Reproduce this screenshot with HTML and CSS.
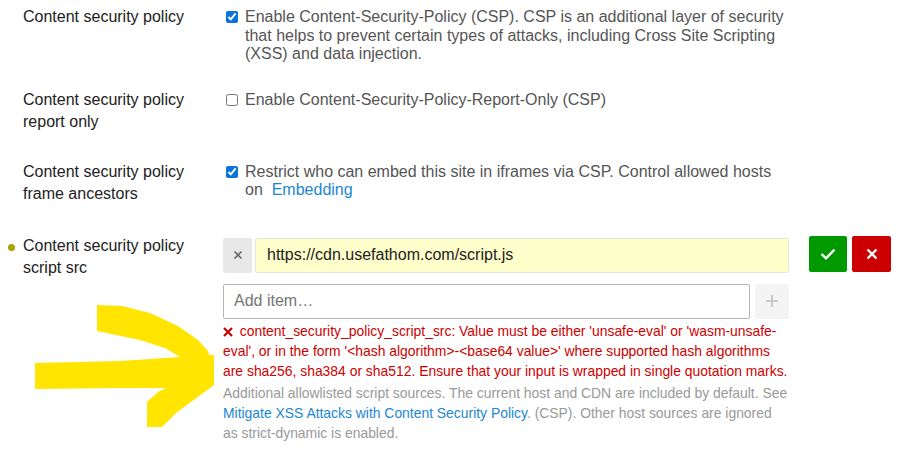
FILE: index.html
```html
<!DOCTYPE html>
<html lang="en">
<head>
<meta charset="utf-8">
<title>Content security policy settings</title>
<link rel="stylesheet" href="styles.css">
</head>
<body>
<div class="page">
  <div class="row row--g25">
    <div class="label">Content security policy</div>
    <div class="content">
      <label class="check"><input type="checkbox" checked><span>Enable Content-Security-Policy (CSP). CSP is an additional layer of security that helps to prevent certain types of attacks, including Cross Site Scripting (XSS) and data injection.</span></label>
    </div>
  </div>
  <div class="row row--g28">
    <div class="label">Content security policy report only</div>
    <div class="content">
      <label class="check"><input type="checkbox"><span>Enable Content-Security-Policy-Report-Only (CSP)</span></label>
    </div>
  </div>
  <div class="row row--g30">
    <div class="label">Content security policy frame ancestors</div>
    <div class="content">
      <label class="check"><input type="checkbox" checked><span>Restrict who can embed this site in iframes via CSP. Control allowed hosts on&nbsp; <a class="link" href="#">Embedding</a></span></label>
    </div>
  </div>
  <div class="row">
    <div class="label label--dirty"><span class="dot"></span><span>Content security policy script src</span></div>
    <div class="content content--list">
      <div class="item">
        <button class="remove" type="button" aria-label="Remove"><svg width="10" height="10" viewBox="0 0 10 10"><path d="M1.5 1.5L8.5 8.5M8.5 1.5L1.5 8.5" stroke="#666" stroke-width="1.6" fill="none"/></svg></button>
        <div class="value">https://cdn.usefathom.com/script.js</div>
      </div>
      <div class="item item--add">
        <input class="add-input" type="text" placeholder="Add item…">
        <button class="plus" type="button" aria-label="Add"><svg width="14" height="14" viewBox="0 0 14 14"><path d="M7 1V13M1 7H13" stroke="#bdbdbd" stroke-width="1.6" fill="none"/></svg></button>
      </div>
      <div class="error"><svg class="error-x" width="10" height="10" viewBox="0 0 10 10"><path d="M1 1L9 9M9 1L1 9" stroke="#cc0000" stroke-width="2.2" fill="none"/></svg> content_security_policy_script_src: Value must be either 'unsafe-eval' or 'wasm-unsafe-eval', or in the form '&lt;hash algorithm&gt;-&lt;base64 value&gt;' where supported hash algorithms are sha256, sha384 or sha512. Ensure that your input is wrapped in single quotation marks.</div>
      <div class="help">Additional allowlisted script sources. The current host and CDN are included by default. See <a class="link" href="#">Mitigate XSS Attacks with Content Security Policy</a>. (CSP). Other host sources are ignored as strict-dynamic is enabled.</div>
    </div>
    <div class="actions">
      <button class="btn btn--ok" type="button" aria-label="Save"><svg width="16" height="12" viewBox="0 0 16 12"><path d="M1.5 6L6 10.3L14.5 1.7" stroke="#fff" stroke-width="2.4" fill="none"/></svg></button>
      <button class="btn btn--cancel" type="button" aria-label="Cancel"><svg width="12" height="12" viewBox="0 0 12 12"><path d="M1.5 1.5L10.5 10.5M10.5 1.5L1.5 10.5" stroke="#fff" stroke-width="2.4" fill="none"/></svg></button>
    </div>
  </div>
  <svg class="arrow" width="917" height="461" viewBox="0 0 917 461" aria-hidden="true">
    <path fill="#ffe500" d="M35 389 L35 363 L120 361 L180 357 L165 348 L140 340 L97 331 L97 305 L122 306 L150 313 L178 326 L198 340 L208 351 L209 355 L214 355 L214 385 L195 399 L176 413 L162 427 L147 427 L147 402 L158 392 L166 388 L120 388 Z"/>
  </svg>
</div>
</body>
</html>
```

FILE: styles.css
```css
* {
  box-sizing: border-box;
}

body {
  margin: 0;
  background: #ffffff;
  font-family: "Liberation Sans", Arial, sans-serif;
  font-size: 16px;
  color: #222222;
}

.page {
  position: relative;
  padding-top: 6px;
  width: 917px;
  height: 461px;
  overflow: hidden;
}

.row {
  display: flex;
  align-items: flex-start;
}

.row--g25 { padding-bottom: 25px; }
.row--g28 { padding-bottom: 28px; }
.row--g30 { padding-bottom: 30px; }

.label {
  width: 223px;
  flex: none;
  padding-left: 23px;
  padding-right: 20px;
  line-height: 22px;
  color: #222222;
}

.label--dirty {
  display: flex;
  align-items: flex-start;
  padding-left: 8px;
}

.dot {
  width: 7px;
  height: 7px;
  border-radius: 50%;
  background: #a9a200;
  margin-top: 9px;
  margin-right: 8px;
  flex: none;
}

.content {
  width: 566px;
  flex: none;
  padding-top: 2px;
}

.check {
  display: flex;
  align-items: flex-start;
  color: #555555;
  line-height: 18.5px;
}

.check input {
  margin: 3px 7px 0 3px;
  width: 12px;
  height: 12px;
  flex: none;
  accent-color: #0a74da;
}

.link {
  color: #1c87d1;
  text-decoration: none;
}

.content--list {
  padding-top: 3px;
}

.item {
  display: flex;
  gap: 3px;
  height: 35px;
}

.item--add {
  margin-top: 11px;
  gap: 5px;
}

.remove {
  width: 29px;
  height: 35px;
  border: 0;
  border-radius: 2px;
  background: #e8e8e8;
  padding: 0;
  display: flex;
  align-items: center;
  justify-content: center;
}

.value {
  flex: 1;
  background: #ffffcc;
  border: 1px solid #e6e6d8;
  border-radius: 2px;
  padding-left: 11px;
  display: flex;
  align-items: center;
  color: #222222;
}

.add-input {
  width: 527px;
  height: 35px;
  border: 1px solid #b5b5b5;
  border-radius: 2px;
  padding: 0 10px;
  font-family: inherit;
  font-size: 16px;
  color: #222222;
  outline: none;
}

.add-input::placeholder {
  color: #757575;
}

.plus {
  width: 34px;
  height: 35px;
  border: 0;
  border-radius: 2px;
  background: #f4f4f4;
  padding: 0;
  display: flex;
  align-items: center;
  justify-content: center;
}

.error {
  margin-top: 2px;
  font-size: 13.9px;
  line-height: 20px;
  color: #cc0000;
}

.error-x {
  vertical-align: -1px;
  margin-right: 3px;
}

.help {
  margin-top: 2px;
  font-size: 13.9px;
  line-height: 20px;
  color: #999999;
}

.actions {
  display: flex;
  gap: 5px;
  margin-left: 20px;
  margin-top: 1px;
}

.btn {
  height: 36px;
  border: 0;
  border-radius: 2px;
  padding: 0;
  display: flex;
  align-items: center;
  justify-content: center;
}

.btn--ok {
  width: 38px;
  background: #009a00;
}

.btn--cancel {
  width: 39px;
  background: #cc0000;
}

.arrow {
  position: absolute;
  left: 0;
  top: 0;
  pointer-events: none;
}
```
